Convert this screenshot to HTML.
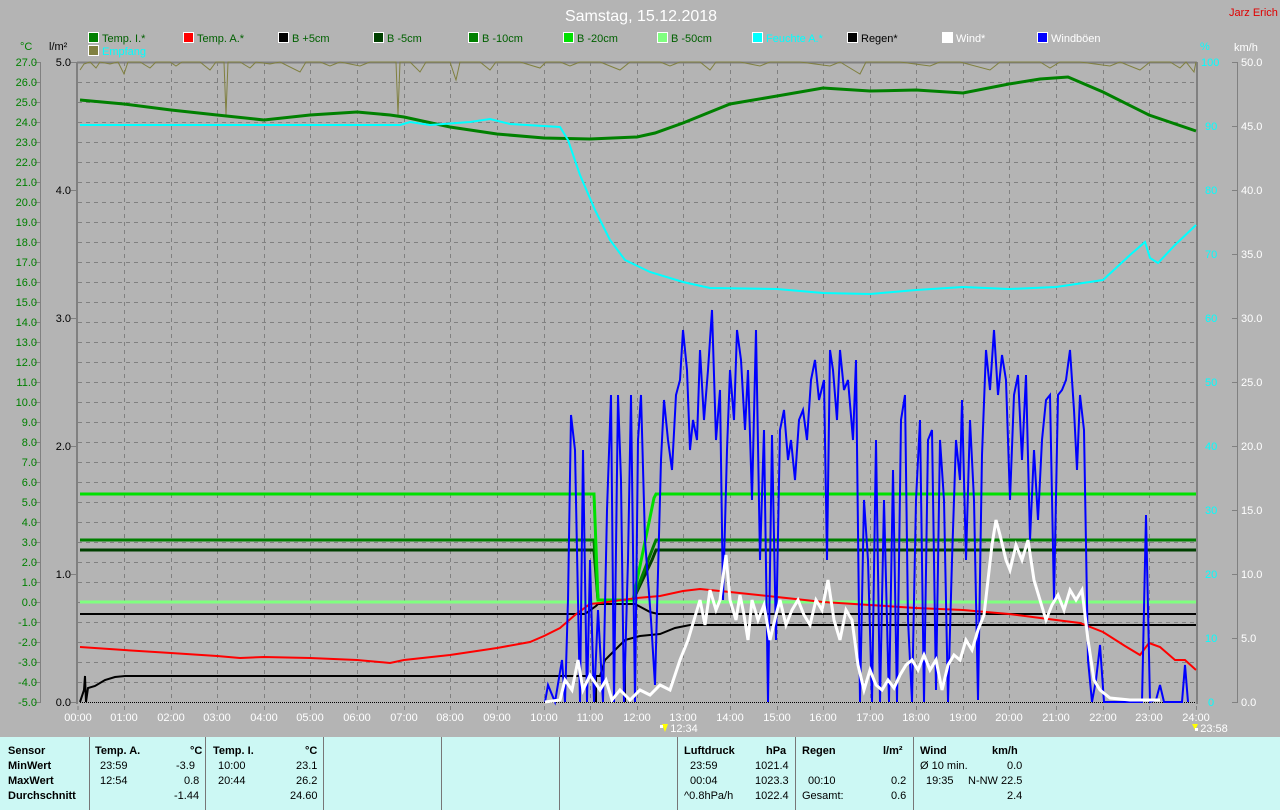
<!DOCTYPE html>
<html><head><meta charset="utf-8"><style>
body{margin:0;width:1280px;height:810px;overflow:hidden;background:#b4b4b4;font-family:"Liberation Sans",sans-serif}
svg{position:absolute;left:0;top:0}
text{font-family:"Liberation Sans",sans-serif;font-size:11px}
.tbl{position:absolute;left:0;top:737px;width:1280px;height:73px;background:#ccf8f4;font-size:11px;color:#000}
.tbl div{position:absolute}
.b{font-weight:bold}
.v{position:absolute;top:0;width:1px;height:73px;background:#777}
</style></head><body>
<svg width="1280" height="737" viewBox="0 0 1280 737">
<text x="641" y="21" fill="#fff" font-size="16" text-anchor="middle" style="font-size:16px">Samstag, 15.12.2018</text>
<text x="1229" y="16" fill="#e00000">Jarz Erich</text>
<g>
<rect x="88.5" y="32.5" width="10" height="10" fill="#008000" stroke="#fff"/><text x="102" y="42" fill="#006000">Temp. I.*</text>
<rect x="183.5" y="32.5" width="10" height="10" fill="#ff0000" stroke="#fff"/><text x="197" y="42" fill="#006000">Temp. A.*</text>
<rect x="278.5" y="32.5" width="10" height="10" fill="#000" stroke="#fff"/><text x="292" y="42" fill="#006000">B +5cm</text>
<rect x="373.5" y="32.5" width="10" height="10" fill="#004000" stroke="#fff"/><text x="387" y="42" fill="#006000">B -5cm</text>
<rect x="468.5" y="32.5" width="10" height="10" fill="#008000" stroke="#fff"/><text x="482" y="42" fill="#006000">B -10cm</text>
<rect x="563.5" y="32.5" width="10" height="10" fill="#00e000" stroke="#fff"/><text x="577" y="42" fill="#006000">B -20cm</text>
<rect x="657.5" y="32.5" width="10" height="10" fill="#80ff80" stroke="#fff"/><text x="671" y="42" fill="#006000">B -50cm</text>
<rect x="752.5" y="32.5" width="10" height="10" fill="#00ffff" stroke="#fff"/><text x="766" y="42" fill="#00ffff">Feuchte A.*</text>
<rect x="847.5" y="32.5" width="10" height="10" fill="#000" stroke="#fff"/><text x="861" y="42" fill="#000">Regen*</text>
<rect x="942.5" y="32.5" width="10" height="10" fill="#fff" stroke="#fff"/><text x="956" y="42" fill="#fff">Wind*</text>
<rect x="1037.5" y="32.5" width="10" height="10" fill="#0000ff" stroke="#fff"/><text x="1051" y="42" fill="#fff">Windböen</text>
<rect x="88.5" y="45.5" width="10" height="10" fill="#808040" stroke="#fff"/><text x="102" y="55" fill="#00ffff">Empfang</text>
</g>
<text x="20" y="50" fill="#008000">°C</text>
<text x="49" y="50" fill="#000">l/m²</text>
<text x="1200" y="50" fill="#00ffff">%</text>
<text x="1234" y="51" fill="#fff">km/h</text>
<!-- grid -->
<g stroke="#808080" stroke-dasharray="4,4" stroke-width="1">
<path d="M78 82.5H1196M78 102.5H1196M78 122.5H1196M78 142.5H1196M78 162.5H1196M78 182.5H1196M78 202.5H1196M78 222.5H1196M78 242.5H1196M78 262.5H1196M78 282.5H1196M78 302.5H1196M78 322.5H1196M78 342.5H1196M78 362.5H1196M78 382.5H1196M78 402.5H1196M78 422.5H1196M78 442.5H1196M78 462.5H1196M78 482.5H1196M78 502.5H1196M78 522.5H1196M78 542.5H1196M78 562.5H1196M78 582.5H1196M78 602.5H1196M78 622.5H1196M78 642.5H1196M78 662.5H1196M78 682.5H1196"/>
<path d="M124.5 62V702M171.5 62V702M217.5 62V702M264.5 62V702M310.5 62V702M357.5 62V702M404.5 62V702M450.5 62V702M497.5 62V702M544.5 62V702M590.5 62V702M637.5 62V702M683.5 62V702M730.5 62V702M777.5 62V702M823.5 62V702M870.5 62V702M916.5 62V702M963.5 62V702M1009.5 62V702M1056.5 62V702M1103.5 62V702M1149.5 62V702"/>
</g>
<!-- axes -->
<g stroke="#808080" stroke-width="1" fill="none">
<path d="M40.5 62V702"/>
<path d="M34 62.5h7M34 82.5h7M34 102.5h7M34 122.5h7M34 142.5h7M34 162.5h7M34 182.5h7M34 202.5h7M34 222.5h7M34 242.5h7M34 262.5h7M34 282.5h7M34 302.5h7M34 322.5h7M34 342.5h7M34 362.5h7M34 382.5h7M34 402.5h7M34 422.5h7M34 442.5h7M34 462.5h7M34 482.5h7M34 502.5h7M34 522.5h7M34 542.5h7M34 562.5h7M34 582.5h7M34 602.5h7M34 622.5h7M34 642.5h7M34 662.5h7M34 682.5h7M34 702.5h7"/>
<path d="M71 62.5h6M71 190.5h6M71 318.5h6M71 446.5h6M71 574.5h6M71 702.5h6"/>
<path d="M1237.5 62V702M1232 62.5h6M1232 126.5h6M1232 190.5h6M1232 254.5h6M1232 318.5h6M1232 382.5h6M1232 446.5h6M1232 510.5h6M1232 574.5h6M1232 638.5h6M1232 702.5h6"/>
<path d="M78 706v4M124.5 706v4M171.5 706v4M217.5 706v4M264.5 706v4M310.5 706v4M357.5 706v4M404.5 706v4M450.5 706v4M497.5 706v4M544.5 706v4M590.5 706v4M637.5 706v4M683.5 706v4M730.5 706v4M777.5 706v4M823.5 706v4M870.5 706v4M916.5 706v4M963.5 706v4M1009.5 706v4M1056.5 706v4M1103.5 706v4M1149.5 706v4M1196.5 706v4"/>
</g>
<path d="M77 62V704M77 62.5H1197M1197 62V704" stroke="#808080" stroke-width="2" fill="none"/>
<g fill="#008000" text-anchor="end">
<text x="37" y="66">27.0</text><text x="37" y="86">26.0</text><text x="37" y="106">25.0</text><text x="37" y="126">24.0</text><text x="37" y="146">23.0</text><text x="37" y="166">22.0</text><text x="37" y="186">21.0</text><text x="37" y="206">20.0</text><text x="37" y="226">19.0</text><text x="37" y="246">18.0</text><text x="37" y="266">17.0</text><text x="37" y="286">16.0</text><text x="37" y="306">15.0</text><text x="37" y="326">14.0</text><text x="37" y="346">13.0</text><text x="37" y="366">12.0</text><text x="37" y="386">11.0</text><text x="37" y="406">10.0</text><text x="37" y="426">9.0</text><text x="37" y="446">8.0</text><text x="37" y="466">7.0</text><text x="37" y="486">6.0</text><text x="37" y="506">5.0</text><text x="37" y="526">4.0</text><text x="37" y="546">3.0</text><text x="37" y="566">2.0</text><text x="37" y="586">1.0</text><text x="37" y="606">0.0</text><text x="37" y="626">-1.0</text><text x="37" y="646">-2.0</text><text x="37" y="666">-3.0</text><text x="37" y="686">-4.0</text><text x="37" y="706">-5.0</text>
</g>
<g fill="#000" text-anchor="end">
<text x="71" y="66">5.0</text><text x="71" y="194">4.0</text><text x="71" y="322">3.0</text><text x="71" y="450">2.0</text><text x="71" y="578">1.0</text><text x="71" y="706">0.0</text>
</g>
<g fill="#00ffff">
<text x="1201" y="66">100</text><text x="1205" y="130">90</text><text x="1205" y="194">80</text><text x="1205" y="258">70</text><text x="1205" y="322">60</text><text x="1205" y="386">50</text><text x="1205" y="450">40</text><text x="1205" y="514">30</text><text x="1205" y="578">20</text><text x="1205" y="642">10</text><text x="1208" y="706">0</text>
</g>
<g fill="#fff">
<text x="1241" y="66">50.0</text><text x="1241" y="130">45.0</text><text x="1241" y="194">40.0</text><text x="1241" y="258">35.0</text><text x="1241" y="322">30.0</text><text x="1241" y="386">25.0</text><text x="1241" y="450">20.0</text><text x="1241" y="514">15.0</text><text x="1241" y="578">10.0</text><text x="1241" y="642">5.0</text><text x="1241" y="706">0.0</text>
</g>
<g fill="#fff" text-anchor="middle">
<text x="78" y="721">00:00</text><text x="124" y="721">01:00</text><text x="171" y="721">02:00</text><text x="217" y="721">03:00</text><text x="264" y="721">04:00</text><text x="310" y="721">05:00</text><text x="357" y="721">06:00</text><text x="404" y="721">07:00</text><text x="450" y="721">08:00</text><text x="497" y="721">09:00</text><text x="544" y="721">10:00</text><text x="590" y="721">11:00</text><text x="637" y="721">12:00</text><text x="683" y="721">13:00</text><text x="730" y="721">14:00</text><text x="777" y="721">15:00</text><text x="823" y="721">16:00</text><text x="870" y="721">17:00</text><text x="916" y="721">18:00</text><text x="963" y="721">19:00</text><text x="1009" y="721">20:00</text><text x="1056" y="721">21:00</text><text x="1103" y="721">22:00</text><text x="1149" y="721">23:00</text><text x="1196" y="721">24:00</text>
<text x="684" y="732">12:34</text><text x="1214" y="732">23:58</text>
</g>
<path d="M662 724l3 8 3-8z" fill="#ff0"/><rect x="660" y="725" width="3" height="3" fill="#fff"/>
<path d="M1192 724l3 6 3-6z" fill="#ff0"/><rect x="1195" y="728" width="3" height="3" fill="#fff"/>
<!-- olive Empfang -->
<polyline fill="none" stroke="#808040" stroke-width="1" points="80,70 84,64 90,62 96,68 100,62 110,64 118,62 124,74 128,62 140,62 150,68 156,62 170,62 176,66 182,62 200,62 210,70 216,62 224,62 226,115 228,62 240,62 250,68 256,62 270,64 280,62 300,72 306,62 320,62 330,66 340,62 360,66 370,62 390,62 396,62 398,115 400,62 410,62 420,72 426,62 440,62 450,62 456,80 460,62 480,62 490,70 496,62 520,62 540,68 546,62 560,62 570,66 580,62 600,62 620,70 630,62 660,62 670,66 680,62 700,62 710,70 716,62 740,62 760,66 770,62 800,62 830,66 840,62 860,74 866,62 900,62 930,66 940,62 960,62 990,70 1000,62 1040,62 1050,68 1060,62 1080,62 1110,66 1120,62 1140,70 1150,62 1170,62 1180,68 1186,62 1194,72 1196,62"/>
<!-- Temp I -->
<polyline fill="none" stroke="#008000" stroke-width="3" points="80,100 124,104 171,110 217,115 264,120 310,115 357,112 390,115 404,117 450,127 497,134 544,138 590,139 637,137 655,133 683,123 730,104 777,96 823,88 870,91 916,90 963,93 1009,84 1040,79 1068,77 1103,92 1149,115 1196,131"/>
<!-- Feuchte -->
<polyline fill="none" stroke="#00ffff" stroke-width="2" points="80,125 400,125 410,122 430,125 470,122 490,119 510,124 560,127 568,140 580,175 595,210 610,240 625,260 650,272 683,282 710,288 777,289 823,293 870,294 916,290 963,287 1009,289 1056,287 1103,280 1130,255 1145,242 1150,258 1158,263 1175,245 1196,225"/>
<!-- soil lines -->
<polyline fill="none" stroke="#80ff80" stroke-width="3" points="80,602 1196,602"/>
<polyline fill="none" stroke="#004000" stroke-width="3" points="80,550 594,550 598,600 633,600 652,560 656,550 1196,550"/>
<polyline fill="none" stroke="#008000" stroke-width="3" points="80,540 594,540 598,600 633,600 654,545 656,540 1196,540"/>
<polyline fill="none" stroke="#00e000" stroke-width="3" points="80,494 594,494 598,600 633,600 654,498 656,494 1196,494"/>
<polyline fill="none" stroke="#000" stroke-width="2" points="80,614 585,614 596,606 598,604 635,604 650,612 658,614 1196,614"/>
<!-- Regen -->
<polyline fill="none" stroke="#000" stroke-width="2" points="80,702 84,690 85,676 86,702 88,688 95,686 105,680 115,677 125,676 600,676 605,660 615,650 625,640 640,636 660,634 675,628 690,625 1196,625"/>
<path d="M596 676V702M625 660V702" stroke="#000" stroke-width="2"/>
<path d="M80 702.5H1196" stroke="#000" stroke-dasharray="1,1"/>
<!-- Temp A -->
<polyline fill="none" stroke="#ff0000" stroke-width="2" points="80,647 124,650 171,653 217,656 240,658 264,657 310,658 357,660 390,663 404,660 450,655 497,648 530,642 544,636 560,628 575,615 590,604 600,603 637,598 660,596 683,591 700,589 730,592 777,597 823,602 870,605 916,608 963,610 1009,614 1056,620 1080,623 1103,632 1125,646 1140,655 1149,643 1160,647 1175,660 1185,660 1196,670"/>
<!-- Windböen -->
<polyline fill="none" stroke="#0000ff" stroke-width="2" points="545,702 548,685 555,702 562,660 565,702 568,600 571,415 575,450 580,702 583,450 587,702 590,560 594,702 598,610 603,702 607,510 611,395 614,702 618,395 621,480 624,702 628,560 631,395 635,702 638,440 641,395 645,540 651,620 655,685 661,460 664,400 668,440 672,470 676,395 680,380 683,330 687,370 690,450 693,420 697,440 700,350 704,420 708,370 712,310 716,440 720,390 723,600 727,450 730,370 734,420 737,330 741,360 745,430 748,370 752,500 756,330 760,560 764,430 768,702 772,435 776,640 780,430 784,410 788,460 791,440 795,480 799,420 803,410 807,440 811,380 815,360 819,400 824,380 827,560 830,350 833,370 837,420 840,350 844,390 848,380 853,440 856,360 860,702 864,500 868,560 872,702 876,440 880,702 884,500 889,702 893,470 897,702 901,420 905,395 908,620 912,702 916,500 920,420 924,702 928,440 932,430 936,690 940,440 944,500 948,702 952,560 956,440 960,480 962,400 966,560 970,420 974,500 978,700 982,455 986,350 990,390 994,330 998,395 1002,355 1006,380 1010,500 1014,395 1018,375 1022,460 1026,375 1030,540 1034,450 1038,520 1042,440 1046,400 1050,395 1054,600 1058,395 1062,390 1066,380 1070,350 1074,410 1077,470 1080,395 1084,430 1088,660 1092,702 1096,680 1100,645 1104,702 1142,702 1146,515 1150,702 1156,700 1160,685 1164,702 1182,702 1185,665 1188,702"/>
<!-- Wind -->
<polyline fill="none" stroke="#fff" stroke-width="3" points="545,702 560,700 565,680 572,690 578,660 583,690 590,675 600,690 606,680 612,700 620,690 630,700 640,690 650,695 660,685 670,690 680,660 688,640 694,620 700,600 705,625 710,590 716,610 720,600 726,555 730,600 736,620 740,595 744,615 748,640 752,600 758,620 764,605 770,640 776,615 780,600 786,625 792,610 798,600 804,615 810,625 816,600 822,610 828,580 834,620 840,640 846,610 852,620 858,665 864,690 870,670 876,685 882,690 888,680 894,688 900,675 906,665 912,660 918,670 924,655 930,670 936,660 942,690 948,665 954,655 960,660 966,640 972,650 978,630 984,615 988,580 992,545 996,520 1000,535 1006,560 1010,570 1016,545 1022,560 1028,540 1034,580 1040,600 1046,620 1052,605 1058,595 1064,610 1070,590 1076,600 1082,590 1088,640 1094,680 1100,690 1110,698 1130,700 1160,700"/>
</svg>
<div class="tbl">
<div class="v" style="left:89px"></div><div class="v" style="left:205px"></div><div class="v" style="left:323px"></div><div class="v" style="left:441px"></div><div class="v" style="left:559px"></div><div class="v" style="left:677px"></div><div class="v" style="left:795px"></div><div class="v" style="left:913px"></div>
<div class="b" style="left:8px;top:8px">Sensor</div><div class="b" style="left:8px;top:23px">MinWert</div><div class="b" style="left:8px;top:38px">MaxWert</div><div class="b" style="left:8px;top:53px">Durchschnitt</div>
<div class="b" style="left:95px;top:8px">Temp. A.</div><div class="b" style="left:190px;top:8px">°C</div>
<div style="left:100px;top:23px">23:59</div><div style="left:176px;top:23px">-3.9</div>
<div style="left:100px;top:38px">12:54</div><div style="left:184px;top:38px">0.8</div>
<div style="left:174px;top:53px">-1.44</div>
<div class="b" style="left:213px;top:8px">Temp. I.</div><div class="b" style="left:305px;top:8px">°C</div>
<div style="left:218px;top:23px">10:00</div><div style="left:296px;top:23px">23.1</div>
<div style="left:218px;top:38px">20:44</div><div style="left:296px;top:38px">26.2</div>
<div style="left:290px;top:53px">24.60</div>
<div class="b" style="left:684px;top:8px">Luftdruck</div><div class="b" style="left:766px;top:8px">hPa</div>
<div style="left:690px;top:23px">23:59</div><div style="left:755px;top:23px">1021.4</div>
<div style="left:690px;top:38px">00:04</div><div style="left:755px;top:38px">1023.3</div>
<div style="left:684px;top:53px">^0.8hPa/h</div><div style="left:755px;top:53px">1022.4</div>
<div class="b" style="left:802px;top:8px">Regen</div><div class="b" style="left:883px;top:8px">l/m²</div>
<div style="left:808px;top:38px">00:10</div><div style="left:891px;top:38px">0.2</div>
<div style="left:802px;top:53px">Gesamt:</div><div style="left:891px;top:53px">0.6</div>
<div class="b" style="left:920px;top:8px">Wind</div><div class="b" style="left:992px;top:8px">km/h</div>
<div style="left:920px;top:23px">Ø 10 min.</div><div style="left:1007px;top:23px">0.0</div>
<div style="left:926px;top:38px">19:35</div><div style="left:968px;top:38px">N-NW 22.5</div>
<div style="left:1007px;top:53px">2.4</div>
</div>
</body></html>
